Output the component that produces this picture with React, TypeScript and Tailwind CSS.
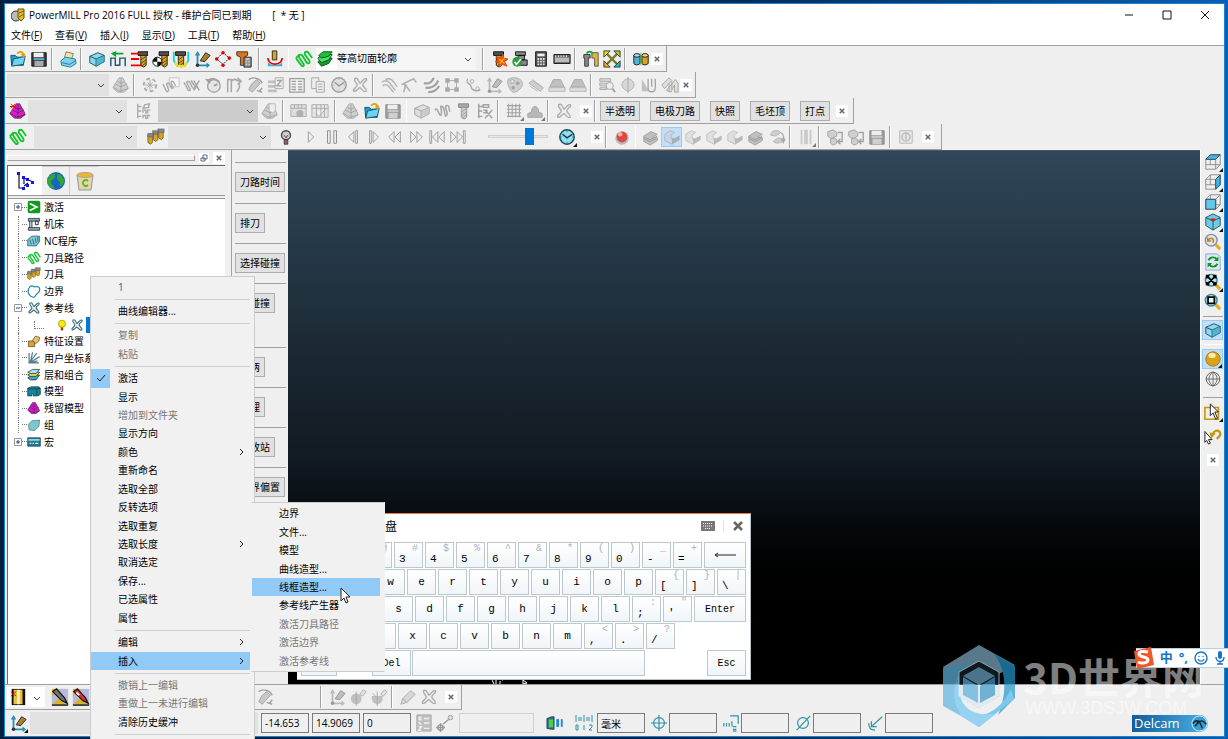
import type { ReactNode } from "react";
import clsx from "clsx";

const tool = (
  <>
    <path d="M4 2h11v4H4z" fill="#555" stroke="#000" />
    <path d="M7 6h6v11l-3 2-3-2z" fill="#d9a520" stroke="#222" />
    <path d="M7 11l6-4M7 15l6-4M8 18l5-4" stroke="#5b3b00" />
  </>
);

const coil = (
  <path
    d="M1 9l6 8c2 2 4 0 2-2L5 9c-2-3 1-5 3-3l5 8c2 2 4 0 3-2l-5-7c-1-3 2-4 4-2l4 6M1 9l4-4"
    fill="none"
    stroke="#12c42a"
    strokeWidth="2"
  />
);

const cone = (color: string) => (
  <>
    <path d="M8 2l4 0 2 4 2 3 2 5-5 4-7 0-5-5 3-5 2-3z" fill={color} stroke="#333" strokeWidth=".8" />
    <path d="M6 6l4 2 4-2M4 9l6 3 6-3M2 13l7 4 9-3M10 3v15" stroke="#333" fill="none" strokeWidth=".8" />
  </>
);

const box = (
  <>
    <path d="M2 7l9-4 7 3v7l-9 5-7-4z" fill="#8ed8ee" stroke="#124b5c" />
    <path d="M2 7l7 3 9-4M9 10v8" fill="none" stroke="#124b5c" />
    <path d="M9 10l9-4v7l-9 5z" fill="#39a5c5" opacity=".7" />
  </>
);

const disk = (
  <>
    <path d="M2 3h16v15H2z" fill="#333a40" stroke="#111" />
    <path d="M4 3h11v5H4z" fill="#eee" />
    <path d="M4 9h12v2H4z" fill="#55b5d0" />
    <path d="M5 12h10v6H5z" fill="#aaa" />
  </>
);

const folder = (
  <>
    <path d="M2 6h5l2 2h7v9H3z" fill="#1d9dcc" stroke="#0a5068" />
    <path d="M5 10l13-3-2 9-13 2z" fill="#6fd3f2" stroke="#0a5068" />
    <path d="M9 4c4-4 7-1 7 2" fill="none" stroke="#e0a000" strokeWidth="2" />
    <path d="M13 5l5-1-1 5z" fill="#e0a000" />
  </>
);

const ribbonX = (
  <path
    d="M4 3c4-2 4 3 6 5 3-2 4-6 7-5 2 2-4 4-4 7 1 3 5 4 4 7-3 2-5-3-7-4-3 1-4 5-7 4-2-3 4-4 4-7 0-2-4-4-3-7z"
    fill="#e7f0f2"
    stroke="#2d6675"
    strokeWidth="1.5"
  />
);

const axes = (
  <>
    <path d="M5 17V4M5 17h12" stroke="#2590b0" strokeWidth="2" fill="none" />
    <path d="M2 6l3-5 3 5zM15 14l4 3-4 3z" fill="#2590b0" />
    <path d="M8 12l6-9 5 3-6 7z" fill="#a9822b" stroke="#222" />
    <circle cx="5" cy="17" r="2" fill="#333" />
  </>
);

const clock = (
  <>
    <circle cx="10" cy="10" r="8" fill="#8edff2" stroke="#1b4b5a" strokeWidth="1.6" />
    <path d="M5 7l5 4 6-4" fill="none" stroke="#134" strokeWidth="1.5" />
    <path d="M10 3v1M10 16v1M3 10h1M16 10h1" stroke="#134" />
  </>
);

const wireBox = (
  <path d="M2 7h11v11H2zM2 7l5-5h11v11l-5 5M13 7l5-5M7 2v11H2M7 13h11" fill="none" stroke="#888" />
);

const lens = (
  <>
    <path d="M13 13l5 5" stroke="#e5ae18" strokeWidth="3.5" />
    <circle cx="8" cy="8" r="6.5" fill="#b6e4ee" stroke="#3e8290" strokeWidth="1.6" />
  </>
);

const step = (
  <>
    <path d="M2 7l6-4 5 2-4 3v3l4 1 5-3v4l-8 5-8-4z" fill="#ccc" stroke="#888" />
    <path d="M9 11l4 1 5-3v4l-8 5v-5z" fill="#777" />
  </>
);

const pages = (
  <>
    <path d="M3 2h8v12H3z" fill="#eee" stroke="#444" />
    <path d="M8 6h9v12H8z" fill="#eee" stroke="#444" />
    <path d="M10 9h5M10 12h5M10 15h5" stroke="#444" />
  </>
);

const icons: Record<string, ReactNode> = {
  folder, disk, box, coil, tool, axes, clock, ribbonX, step, pages,
  cone: cone("#aaa"),
  pinkCone: (
    <>
      {cone("#e815d6")}
      <path d="M2 2l5 5M7 2L2 7M1 5h7" stroke="#e00" />
    </>
  ),
  print: (
    <>
      <path d="M6 9l2-7 8 2-2 6z" fill="#f5e1a0" stroke="#777" />
      <path d="M2 12l5-4 11 2 1 5-6 4-10-2z" fill="#7fd0e8" stroke="#1d7c9c" />
      <path d="M3 14l9 2 6-4" fill="none" stroke="#1d7c9c" />
    </>
  ),
  feed: (
    <>
      <path d="M2 18V9h5v8h5V9h6v9" fill="none" stroke="#1b5d72" strokeWidth="1.6" />
      <path d="M4 4h12" stroke="#12a530" strokeWidth="2" />
      <path d="M8 1L2 4l6 4z" fill="#12a530" />
    </>
  ),
  toolRed: (
    <>
      <g transform="translate(5 0)">{tool}</g>
      <path d="M1 4h9M1 10h9M1 17h12" stroke="#e00" strokeWidth="2" />
    </>
  ),
  toolBall: (
    <>
      <g transform="translate(5 0)">{tool}</g>
      <circle cx="7" cy="13" r="5" fill="#fff" stroke="#111" />
      <path d="M7 13V8a5 5 0 00-5 5zM7 13v5a5 5 0 005-5z" fill="#111" />
    </>
  ),
  toolCup: (
    <>
      {tool}
      <path d="M2 2v10l4 6h8l4-6V2" fill="none" stroke="#19d1dc" strokeWidth="2" />
      <path d="M3 14l4 4h6l4-4" fill="none" stroke="#ece01f" strokeWidth="2.5" />
    </>
  ),
  points: (
    <>
      <path d="M10 3l7 6-7 7-7-6z" fill="none" stroke="#111" strokeDasharray="2 1" />
      <circle cx="10" cy="3" r="2" fill="#d00" /><circle cx="17" cy="9" r="2" fill="#d00" />
      <circle cx="10" cy="17" r="2" fill="#d00" /><circle cx="3" cy="10" r="2" fill="#d00" />
    </>
  ),
  toolCalc: (
    <>
      <path d="M2 2h12v4l-3 2v9H6V8L2 6z" fill="#d8741c" stroke="#333" />
      <path d="M10 8h8v11h-8z" fill="#999" stroke="#222" />
      <path d="M12 10h4M12 13h1M15 13h1M12 16h1M15 16h1" stroke="#fff" />
    </>
  ),
  holder: (
    <>
      <path d="M2 13c2 5 14 5 16 0v5H2z" fill="#3bb1d8" />
      <path d="M7 1h5v10H7z" fill="#d9a520" stroke="#222" />
      <path d="M2 9c1 9 15 9 16 0" fill="none" stroke="#e00" strokeWidth="2" />
    </>
  ),
  layers: (
    <>
      <path d="M2 13l5-4h11l-4 6-8 3z" fill="#0da02a" stroke="#064d12" />
      <path d="M2 9l5-4h11l-4 6-8 3z" fill="#58dd6a" stroke="#064d12" />
      <path d="M3 6l5-4h10l-4 5-8 2z" fill="#19c23a" stroke="#064d12" />
    </>
  ),
  burst: (
    <>
      {tool}
      <path d="M7 7l4 2 4-4v4l5 1-4 3 3 5-5-2-3 3-1-5-4-1 3-2z" fill="#ff5a0a" stroke="#d40" />
      <path d="M10 10l6 5M16 9l-5 6" stroke="#fd4" />
    </>
  ),
  check: (
    <>
      <path d="M5 2h11v4H5zM8 6h7v5H8zM10 11h8v6h-8z" fill="#888" stroke="#111" />
      <circle cx="7" cy="13" r="5.5" fill="#2a9a3c" />
      <path d="M4 13l2 3 5-6" fill="none" stroke="#fff" strokeWidth="1.8" />
    </>
  ),
  calc: (
    <>
      <path d="M4 2h12v16H4z" fill="#555" stroke="#111" />
      <path d="M6 4h8v3H6z" fill="#eee" />
      <path d="M6 10h8M6 13h8M6 16h8" stroke="#ddd" strokeWidth="2" strokeDasharray="2 1" />
    </>
  ),
  ruler: (
    <>
      <path d="M1 5h18v10H1z" fill="#666" stroke="#111" />
      <path d="M2 11h16" stroke="#bbb" strokeWidth="5" />
      <path d="M3 6v2M6 6v2M9 6v2M12 6v2M15 6v2" stroke="#fff" />
    </>
  ),
  clamps: (
    <>
      <path d="M2 5h7v4H7v9H3V9H2z" fill="#888" stroke="#333" />
      <path d="M11 3h7v15h-4V9h-3z" fill="#e2b43a" stroke="#555" />
      <path d="M5 4c2-3 5-3 7 0" fill="none" stroke="#12a530" strokeWidth="2" />
    </>
  ),
  arrows4: (
    <>
      <path d="M4 4l12 12M16 4L4 16" stroke="#777a2a" strokeWidth="2.5" />
      <path d="M1 1h7L1 8z" fill="#e6e21b" stroke="#333" /><path d="M19 1h-7l7 7z" fill="#b4c936" stroke="#333" />
      <path d="M1 19h7l-7-7z" fill="#e8b012" stroke="#333" /><path d="M19 19h-7l7-7z" fill="#18bcd4" stroke="#333" />
    </>
  ),
  cylinders: (
    <>
      <path d="M2 6v9c1 2 5 2 7 0V6z" fill="#4fb4d0" stroke="#111" /><ellipse cx="5.5" cy="6" rx="3.5" ry="2" fill="#a7e3f2" stroke="#111" />
      <path d="M11 6v9c1 2 5 2 7 0V6z" fill="#d9a520" stroke="#111" /><ellipse cx="14.5" cy="6" rx="3.5" ry="2" fill="#f4d77c" stroke="#111" />
      <path d="M10 3v14" stroke="#2c4" />
    </>
  ),
  swirl: (
    <>
      <circle cx="10" cy="10" r="7" fill="none" stroke="#555" strokeDasharray="4 3" strokeWidth="2" />
      <path d="M10 4v12M4 10h12M7 7l6 6M13 7l-6 6" stroke="#555" />
    </>
  ),
  coilBox: (
    <>
      <path d="M8 2h11v10H8z" fill="#fff" stroke="#888" />
      <path d="M1 9l4 8c2 1 3-1 2-3L5 9c2-3 4 0 5 3s3 2 2 0l-2-5c1-3 4 0 5 4" fill="none" stroke="#555" strokeWidth="1.5" />
    </>
  ),
  coilX: (
    <>
      <path d="M1 7l5 9c2 1 3-1 1-3L4 7c2-3 4 0 5 3s3 5 5 3L9 5" fill="none" stroke="#555" strokeWidth="1.6" />
      <path d="M12 5l6 11M18 5l-6 11" stroke="#444" strokeWidth="1.6" />
    </>
  ),
  clockTurn: (
    <>
      <circle cx="11" cy="11" r="7" fill="#ddd" stroke="#444" strokeWidth="1.5" />
      <path d="M1 3l8 1-3 5z" fill="#444" />
      <path d="M4 6c4-5 10-3 13 1M11 11l4-2" fill="none" stroke="#444" strokeWidth="2" />
    </>
  ),
  fork: <path d="M3 18V4h4v14M7 6c2-3 6-3 8 0M12 5h4v8l-3 5M14 2l4 4-4 3" fill="none" stroke="#555" strokeWidth="1.7" />,
  toolTurn: (
    <>
      <path d="M7 8l5-4 4 4-9 10-4-3z" fill="#999" stroke="#444" />
      <path d="M3 4c5-4 13-1 15 4M18 13l-3 4M12 16l6 2" fill="none" stroke="#444" strokeWidth="1.6" />
    </>
  ),
  turnArrows: (
    <>
      <path d="M3 8c0-5 8-7 11-3l-5 4zM17 12c0 5-8 6-11 3l5-4z" fill="#aaa" stroke="#666" />
      <path d="M14 5c4 2 4 5 3 9M15 12l2 4 2-4" fill="none" stroke="#555" strokeWidth="1.5" />
    </>
  ),
  layerZ: (
    <>
      <path d="M1 5h9v3H1zM1 10h8v3H1zM1 15h10v3H1z" fill="#888" />
      <path d="M9 2h9v12H9z" fill="#eee" stroke="#555" />
      <path d="M11 5h5l-5 6h5" fill="none" stroke="#444" strokeWidth="1.5" />
    </>
  ),
  table: (
    <>
      <path d="M2 3h16v15H2z" fill="#fff" stroke="#333" strokeWidth="1.4" />
      <path d="M4 6h5M11 6h5M4 9h5M11 9h5M4 12h5M11 12h5M4 15h5M11 15h5" stroke="#333" strokeWidth="1.4" />
    </>
  ),
  curves: <path d="M2 7c6-5 9 1 15 9M3 11c5-4 7 1 12 7M6 4c5-3 9 1 13 8" fill="none" stroke="#666" strokeWidth="1.5" />,
  hook: <path d="M3 18l2-8-3-1 12-6 3 4M5 10l5 7" fill="none" stroke="#666" strokeWidth="1.8" />,
  arcs: <path d="M2 8c5 1 9-1 11-6M4 13c7 1 12-3 14-8M7 18c6 0 10-3 12-7" fill="none" stroke="#444" strokeWidth="2.5" />,
  squares: <path d="M3 3h4v4H3zM13 3h4v4h-4zM3 13h4v4H3zM13 13h4v4h-4zM7 5h6M7 15h6M5 7v6M15 7v6" fill="#555" stroke="#555" />,
  scurve: (
    <>
      <path d="M4 3c-3 6 4 5 4 9s7 6 10 3" fill="none" stroke="#555" strokeWidth="1.5" />
      <circle cx="9" cy="6" r="2" fill="none" stroke="#555" /><circle cx="15" cy="14" r="2" fill="none" stroke="#555" />
    </>
  ),
  drop: (
    <>
      <path d="M2 4c6-4 14-2 16 3s-6 12-10 11S1 8 2 4z" fill="#aaa" stroke="#555" />
      <circle cx="7" cy="6" r="2" fill="#eee" stroke="#444" /><circle cx="13" cy="8" r="2" fill="#444" /><circle cx="8" cy="13" r="2" fill="#444" />
    </>
  ),
  hatch: <path d="M2 8l4-3 12 8-3 4zM6 4l11 8M3 11l9 6" fill="#aaa" stroke="#666" />,
  frustum: (
    <>
      <path d="M6 4h8l4 8H2z" fill="#888" stroke="#555" />
      <path d="M1 13h18v4H1z" fill="#ccc" stroke="#666" />
    </>
  ),
  find: (
    <>
      <path d="M2 3h12v3H2zM2 8h8v3H2zM2 13h8v2H2z" fill="#bbb" stroke="#555" />
      <circle cx="13" cy="11" r="4" fill="#eee" stroke="#444" /><path d="M16 14l3 4" stroke="#444" strokeWidth="2" />
    </>
  ),
  leaf: <path d="M10 1v18M10 3c-9 2-9 11 0 14 9-3 9-12 0-14" fill="#bbb" stroke="#555" />,
  wedge: (
    <>
      <path d="M2 3l8 14H2z" fill="#888" />
      <path d="M9 3v10c0 6 8 6 8 0V3M13 3v9" fill="none" stroke="#444" strokeWidth="1.4" />
    </>
  ),
  ridge: (
    <>
      <path d="M1 10l8-8 3 3-8 9zM6 16L16 4l3 4v10h-4v-8l-4 8z" fill="#ccc" stroke="#444" />
      <path d="M9 8v9M12 6v9" stroke="#444" />
    </>
  ),
  tree: <path d="M3 2v16M3 5h4M3 10h4M3 16h4M9 7l2-4 5-1-1 4zM9 12V9h3v3h2V9h3M9 18v-3h3v3h2v-3h3" fill="none" stroke="#555" strokeWidth="1.5" />,
  toolPad: (
    <>
      {cone("#aaa")}
      <path d="M9 2h7v8l-3 2-4-2z" fill="#eee" stroke="#777" />
    </>
  ),
  windowTool: (
    <>
      <path d="M1 3h17v13H1zM1 7h17M5 3v4M9 3v4M13 3v4" fill="#ccc" stroke="#555" />
      <circle cx="11" cy="13" r="4" fill="#666" />
    </>
  ),
  windowCheck: <path d="M1 3h18v14H1zM1 7h18M6 3v14M11 3v14M15 3v14M5 12l4 4 8-9" fill="#ddd" stroke="#555" />,
  coil3: <path d="M1 9c3-5 5 9 7 5S5 3 9 5s2 13 5 10-4-10 0-11 2 6 4 7" fill="none" stroke="#555" strokeWidth="1.8" />,
  treeX: <path d="M3 2v16M3 5h4M3 10h4M3 16h4M8 3h6v3H8zM8 9h4v3H8M10 9l8 9M18 9l-8 9" fill="none" stroke="#444" strokeWidth="1.6" />,
  grid: <path d="M4 2v15M8 2v15M12 2v15M16 2v15M2 4h16M2 8h16M2 12h16M2 16h16" stroke="#444" strokeWidth="1.2" />,
  dome: <path d="M2 17v-4l4-2c0-8 8-8 8 0l4 2v4z" fill="#777" stroke="#444" />,
  tools3: (
    <>
      <path d="M13 2h5v9l-2 2-3-2zM7 4h5v9l-2 2-3-2zM1 7h5v9l-2 2-3-2z" fill="#d9a520" stroke="#5a4a22" strokeWidth=".8" />
      <path d="M12 1h7v4h-6zM6 3h6v4H7zM1 6h6v4H1z" fill="#888" stroke="#555" strokeWidth=".6" />
    </>
  ),
  bulb: (
    <>
      <circle cx="10" cy="8" r="5" fill="#ccc" stroke="#444" strokeWidth="1.5" />
      <path d="M8 13h4v5H8z" fill="#8a6a60" stroke="#433" /><path d="M8 8l2 3 2-3" fill="none" stroke="#444" />
    </>
  ),
  bulbOn: (
    <>
      <circle cx="10" cy="8" r="6" fill="#f6f000" stroke="#887700" />
      <path d="M8 14h4v5H8z" fill="#8b3d0c" />
    </>
  ),
  play: <path d="M7 4v12l6-6z" fill="#eee" stroke="#999" />,
  pause: <path d="M5 3h3v14H5zM12 3h3v14h-3z" fill="#eee" stroke="#888" />,
  stepBack: <path d="M11 4v12L5 10zM13 3h2v14h-2z" fill="#eee" stroke="#999" />,
  stepFwd: <path d="M9 4v12l6-6zM5 3h2v14H5z" fill="#eee" stroke="#999" />,
  rewind: <path d="M9 4v12l-6-6zM16 4v12l-6-6z" fill="#eee" stroke="#999" />,
  forward: <path d="M4 4v12l6-6zM11 4v12l6-6z" fill="#eee" stroke="#999" />,
  first: <path d="M2 3h2v14H2zM11 4v12l-6-6zM18 4v12l-6-6z" fill="#eee" stroke="#999" />,
  last: <path d="M2 4v12l6-6zM9 4v12l6-6zM16 3h2v14h-2z" fill="#eee" stroke="#999" />,
  ball: (
    <>
      <circle cx="10" cy="11" r="7.5" fill="#bbb" />
      <circle cx="10" cy="10" r="6" fill="#dc4a44" /><circle cx="8" cy="7" r="2.5" fill="#f8b0a8" />
    </>
  ),
  stackStep: (
    <>
      <path d="M2 9l8-5 7 3-5 3 5 1v3l-8 5-7-4z" fill="#888" stroke="#444" />
      <path d="M2 12l7 3 8-4M2 10l7 3 8-4" fill="none" stroke="#333" />
    </>
  ),
  stripes: <path d="M4 2h2v16H4zM8 2h4v16H8zM14 2h2v16h-2z" fill="#999" />,
  power: (
    <>
      <path d="M3 3h14v14H3z" fill="#ddd" stroke="#777" />
      <circle cx="10" cy="10" r="4.5" fill="none" stroke="#777" strokeWidth="1.5" /><path d="M10 7v6" stroke="#777" strokeWidth="1.5" />
    </>
  ),
  stepOut: (
    <>
      <path d="M2 4l6-2 4 3v4l-6 3-4-3zM5 12l4-1 3 2v4l-4 2-3-2z" fill="#aaa" stroke="#444" />
      <path d="M13 5h5v10h-4M16 12l-3 3 3 3" fill="none" stroke="#444" strokeWidth="1.5" />
    </>
  ),
  run: (
    <>
      <rect x="1" y="1" width="18" height="18" rx="3" fill="#0e9b1d" />
      <path d="M4 5l10 5-10 5" fill="none" stroke="#fff" strokeWidth="2.5" />
    </>
  ),
  machine: (
    <>
      <path d="M2 2h16v4H2zM2 15h16v4H2z" fill="#8aa4aa" stroke="#123" />
      <path d="M4 6v9M7 6v9M12 6h4v5h-4z" stroke="#123" fill="#fff" strokeWidth="1.3" />
    </>
  ),
  nc: (
    <>
      <path d="M1 8l6-5h11v8l-5 6H1z" fill="#7cc4d6" stroke="#1c5564" />
      <path d="M4 8l2 7M8 7l2 8M12 6l1 7M15 4l1 7" stroke="#2a6a7a" strokeWidth="1.2" />
    </>
  ),
  boundary: <path d="M4 4c4-4 5 1 8 0s7 0 6 5-5 4-6 8-7 1-9-2-2-8 1-11z" fill="#fff" stroke="#1b87a3" strokeWidth="1.7" />,
  feature: (
    <>
      <path d="M2 10h9v8H2z" fill="#d6a23c" stroke="#5b4010" />
      <path d="M8 9l4-6 6 2-1 5-5 4z" fill="#e8c070" stroke="#5b4010" />
    </>
  ),
  frame: <path d="M3 3v14h14M4 16L14 3M5 15L8 2M5 16L18 8M5 17l10-3" fill="none" stroke="#557e8a" strokeWidth="1.8" />,
  level: (
    <>
      <path d="M1 14l6-4h11l-5 7H5z" fill="#3aa9cc" stroke="#123" />
      <path d="M1 10l6-4h11l-5 6H5z" fill="#f1dc3c" stroke="#123" />
      <path d="M1 6l7-4h10l-5 6H5z" fill="#a9e0f0" stroke="#123" />
    </>
  ),
  model: (
    <>
      <path d="M1 6l5-2h11l2 2v9l-4 2H9v-3H7v3H1z" fill="#15859b" stroke="#063b47" />
      <path d="M1 7h13v9M14 7l5-1" fill="none" stroke="#063b47" />
    </>
  ),
  residual: cone("#e012d6"),
  group: <path d="M2 9l5-5 11-1-1 9-6 6-8-1z" fill="#7cc6cc" stroke="#3c8187" />,
  macro: (
    <>
      <path d="M1 4h18v12H1z" fill="#1f7f96" stroke="#083844" />
      <path d="M2 7h16" stroke="#bfe8f2" strokeWidth="2" /><path d="M4 12h2M8 12h2M12 12h4" stroke="#fff" strokeWidth="2" />
    </>
  ),
  explorer: (
    <>
      <path d="M4 3v14h5M9 6v7M9 7l9 4M9 15l4-3" fill="none" stroke="#113" strokeWidth="1.2" />
      <path d="M2 1h3v3H2zM7 5h3v3H7zM11 7h3v3h-3zM16 10h3v3h-3zM7 16h3v3H7zM11 13h3v3h-3z" fill="#1414f0" />
    </>
  ),
  globe: (
    <>
      <circle cx="10" cy="10" r="9" fill="#1766c4" />
      <path d="M4 4c3-3 6-1 5 2s-4 2-4 5 4 3 3 7C3 17 1 13 1 9zM12 3c4 1 6 4 6 8-1 3-3 5-4 4s1-4-1-5-3-5-1-7z" fill="#31a536" />
    </>
  ),
  bin: (
    <>
      <path d="M2 4h16l-2 15H4z" fill="#d8d3bf" stroke="#999" />
      <path d="M4 6h12l-1 11H6z" fill="#ecd59a" />
      <ellipse cx="10" cy="4" rx="8" ry="2.5" fill="#f0b52c" stroke="#a9a9a9" />
      <path d="M13 10c-2-2-5-1-5 2s3 4 5 2" fill="none" stroke="#4ab53f" strokeWidth="1.8" />
    </>
  ),
  viewTop: (
    <>
      {wireBox}
      <path d="M2 7l5-5h11l-5 5z" fill="#43b7de" stroke="#246" />
    </>
  ),
  viewSide: (
    <>
      {wireBox}
      <path d="M13 7l5-5v11l-5 5z" fill="#43b7de" stroke="#246" />
    </>
  ),
  viewFront: (
    <>
      {wireBox}
      <path d="M2 7h11v11H2z" fill="#63c7e8" stroke="#246" />
    </>
  ),
  viewIso: (
    <>
      <path d="M10 1l8 4v9l-8 5-8-5V5z" fill="#6fcbe6" stroke="#184d60" />
      <path d="M2 5l8 4 8-4M10 9v10" fill="none" stroke="#184d60" /><path d="M7 6h6l-3 4z" fill="#e11" />
    </>
  ),
  zoomBack: (
    <>
      <path d="M13 13l5 5" stroke="#e5ae18" strokeWidth="3.5" />
      <circle cx="8" cy="8" r="6.5" fill="#e4e6f2" stroke="#8a8fb0" strokeWidth="1.6" />
      <path d="M5 8c2-4 7-2 5 3M4 5v4h4" fill="none" stroke="#b98a10" strokeWidth="1.7" />
    </>
  ),
  refresh: (
    <>
      <path d="M2 1h13l3 3v15H2z" fill="#dfe6fa" stroke="#8fa0cf" />
      <path d="M5 8c2-4 7-4 9-1M15 12c-2 4-7 4-9 1" fill="none" stroke="#0a9a1c" strokeWidth="2.2" />
      <path d="M16 4v5h-5zM4 16v-5h5z" fill="#0a9a1c" />
    </>
  ),
  zoomFit: (
    <>
      {lens}
      <path d="M4 4l8 8M12 4l-8 8M3 6V3h3M10 3h3v3M3 10v3h3M10 13h3v-3" fill="none" stroke="#000" strokeWidth="1.9" />
    </>
  ),
  zoomBox: (
    <>
      {lens}
      <path d="M4.500 4.500h7v7h-7z" fill="#dff" stroke="#000" strokeWidth="1.9" />
    </>
  ),
  sphere: (
    <>
      <circle cx="10" cy="10" r="8" fill="#d8a31c" stroke="#9b7616" /><ellipse cx="9" cy="6" rx="4" ry="3" fill="#fbe9a8" />
    </>
  ),
  wireGlobe: (
    <>
      <circle cx="10" cy="10" r="7.5" fill="#eee" stroke="#555" />
      <path d="M2 10h16M10 2v16M10 2c-6 5-6 11 0 16M10 2c6 5 6 11 0 16" fill="none" stroke="#666" />
    </>
  ),
  pick: (
    <>
      <path d="M1 5h15v13H1z" fill="none" stroke="#c8960c" strokeWidth="1.8" />
      <path d="M7 1l9 9h-4l3 7-2 1-3-7-3 3z" fill="#fff" stroke="#111" />
    </>
  ),
  pickUndo: (
    <>
      <path d="M1 5l8 9H5l2 4-2 1-2-4-2 2z" fill="#fff" stroke="#111" />
      <path d="M10 9c0-6 9-7 8 0-1 2-2 3-4 4" fill="none" stroke="#c8960c" strokeWidth="2.5" /><path d="M6 6l7 1-5 6z" fill="#c8960c" />
    </>
  ),
  stock: (
    <>
      <path d="M3 1h15v18H3z" fill="#111" /><path d="M5 2h10v16H5z" fill="#e9bf45" /><path d="M9 2h3v16H9z" fill="#fff1b0" />
      <path d="M2 4l6 5M8 4L2 9M5 2v8" stroke="#d00" />
    </>
  ),
  pen: (
    <>
      <path d="M1 1h18v18H1z" fill="#b9b9e0" /><path d="M1 1h9l-9 9zM1 19L11 9l5 10z" fill="#d8b32c" />
      <path d="M2 4l4-3 9 10 3 6-6-3z" fill="#777" stroke="#111" strokeWidth="1.4" /><path d="M1 19h18" stroke="#111" strokeWidth="1.5" />
    </>
  ),
  penRed: (
    <>
      <path d="M1 1h18v18H1z" fill="#b9b9e0" /><path d="M1 1h9l-9 9zM1 19L11 9l5 10z" fill="#d8b32c" />
      <path d="M2 4l4-3 9 10 3 6-6-3z" fill="#d33" stroke="#111" strokeWidth="1.4" /><path d="M5 5l3 3" stroke="#fff" strokeWidth="2" />
      <path d="M1 19h18" stroke="#111" strokeWidth="1.5" />
    </>
  ),
  pencil: <path d="M2 18l2-6 9-9 5 4-9 9zM4 12l5 4" fill="#bbb" stroke="#555" />,
  plug: (
    <>
      <circle cx="8" cy="12" r="6" fill="#888" /><path d="M8 4v16M12 7l4-5 3 2-4 5z" fill="#ddd" stroke="#555" />
    </>
  ),
  plugHalf: (
    <>
      <path d="M2 9h12v3a6 6 0 01-12 0z" fill="#888" /><path d="M8 4v16M3 6l4 4M12 7l4-5 3 2-4 5z" fill="#ddd" stroke="#555" />
    </>
  ),
  xyz: (
    <>
      <path d="M2 1h16v18H2z" fill="#888" stroke="#555" /><path d="M4 3l3 4M7 3L4 7M4 9l3 3M4 14h3l-3 4h3M10 5h6M10 10h6M10 16h6" fill="none" stroke="#eee" strokeWidth="1.6" />
    </>
  ),
  snap: (
    <>
      <circle cx="5" cy="15" r="3" fill="none" stroke="#999" strokeWidth="1.5" /><path d="M5 10v10M0 15h10M8 11l6-5" stroke="#999" strokeWidth="1.5" />
      <circle cx="16" cy="4" r="2.500" fill="#ddd" stroke="#999" />
    </>
  ),
  battery: (
    <>
      <path d="M1 5l5-2h3v14H6l-5-1z" fill="#2b6d84" stroke="#124" strokeWidth=".7" /><path d="M3 6h5v9H3z" fill="#46d04b" /><path d="M12 6h2v8h-2zM17 6h1v8h-1z" fill="#1684e0" stroke="#1684e0" />
    </>
  ),
  target: <path d="M10 1v18M1 10h18M10 4a6 6 0 100 12 6 6 0 000-12z" fill="none" stroke="#2d93a6" strokeWidth="1.3" />,
  corner: <path d="M9 2h9v9M2 10v4M5 10v4M8 10v4M11 8v6M12 14h4M12 17h4M12 19h4" fill="none" stroke="#2d93a6" strokeWidth="1.3" />,
  diameter: <path d="M3 18L18 2M10 4a6 6 0 100 12 6 6 0 000-12z" fill="none" stroke="#2d93a6" strokeWidth="1.3" />,
  radius: <path d="M18 3L7 13M6 8v6h6M3 10c0 5 2 8 7 8" fill="none" stroke="#2d93a6" strokeWidth="1.3" />,
};

function Icon({ name, dim, className = "w-[18px] h-[18px]" }: { name: string; dim?: boolean; className?: string }) {
  return (
    <svg viewBox="0 0 20 20" aria-hidden="true" className={clsx("shrink-0", className, dim && "opacity-45 grayscale")}>
      {icons[name]}
    </svg>
  );
}

function IconButton({ name, dim, active, corner }: { name: string; dim?: boolean; active?: boolean; corner?: boolean }) {
  return (
    <button
      aria-label={name}
      className={clsx(
        "relative flex h-5 w-[21px] shrink-0 items-center justify-center",
        active && "border border-[#99cbf2] bg-[#c4dff5]"
      )}
    >
      <Icon name={name} dim={dim} />
      {corner && (
        <svg viewBox="0 0 4 4" aria-hidden="true" className="absolute right-0 bottom-0 h-1 w-1">
          <path d="M4 0v4H0z" fill={dim ? "#777" : "#111"} />
        </svg>
      )}
    </button>
  );
}

const Icons = ({ names, dim }: { names: string; dim?: boolean }) => (
  <>
    {names.split(" ").map((name, i) => (
      <IconButton key={i} name={name} dim={dim} />
    ))}
  </>
);

const Sep = ({ light }: { light?: boolean }) => (
  <div className={clsx("mr-1 ml-0.5 h-[22px] w-0.5 shrink-0 border-r border-white", !light && "border-l border-l-[#a0a0a0]")} />
);

const CloseBox = () => (
  <button aria-label="close" className="flex h-3 w-3 shrink-0 items-center justify-center bg-white">
    <svg viewBox="0 0 8 8" className="h-1.5 w-1.5" aria-hidden="true">
      <path d="M1 1l6 6M7 1L1 7" stroke="#5c6b7a" strokeWidth="2" />
    </svg>
  </button>
);

function Chevron() {
  return (
    <svg viewBox="0 0 8 8" className="pointer-events-none absolute top-[8px] right-1 h-2 w-2" aria-hidden="true">
      <path d="M1 2l3 3 3-3" fill="none" stroke="#444" />
    </svg>
  );
}

function Combo({ label, className }: { label: string; className: string }) {
  return (
    <div className={clsx("relative h-[22px] shrink-0", className)}>
      <select aria-label={label} className="h-full w-full appearance-none bg-transparent outline-none">
        <option></option>
      </select>
      <Chevron />
    </div>
  );
}

const Toolbar = ({ children }: { children: ReactNode }) => (
  <div className="flex h-[26px]">
    <div className="flex items-center border-r border-b border-[#a0a0a0] pr-[3px] pl-0.5">{children}</div>
  </div>
);

const TextButton = ({ children }: { children: ReactNode }) => (
  <button className="h-5 shrink-0 border border-[#adadad] bg-[#e1e1e1] px-1 leading-4 whitespace-nowrap">{children}</button>
);

type TreeNode = { icon: string; label: string; expand?: string };

const tree: TreeNode[] = [
  { icon: "run", label: "激活", expand: "+" },
  { icon: "machine", label: "机床" },
  { icon: "nc", label: "NC程序" },
  { icon: "coil", label: "刀具路径" },
  { icon: "tools3", label: "刀具" },
  { icon: "boundary", label: "边界" },
  { icon: "ribbonX", label: "参考线", expand: "-" },
  { icon: "child", label: "1" },
  { icon: "feature", label: "特征设置" },
  { icon: "frame", label: "用户坐标系" },
  { icon: "level", label: "层和组合" },
  { icon: "model", label: "模型" },
  { icon: "residual", label: "残留模型" },
  { icon: "group", label: "组" },
  { icon: "macro", label: "宏", expand: "+" },
];

function Explorer() {
  return (
    <section className="flex w-[220px] shrink-0 flex-col pl-0.5">
      <div className="flex h-[15px] items-center gap-1">
        <div className="h-1.5 flex-1 border border-[#a0a0a0] border-l-white border-t-white bg-[#efefef]" />
        <button aria-label="float" className="flex h-2.5 w-2.5 items-center justify-center bg-white">
          <svg viewBox="0 0 8 8" className="h-2 w-2" aria-hidden="true">
            <path d="M3 1h4v4H3zM1 4h4v3H1z" fill="#fff" stroke="#5c6b7a" />
          </svg>
        </button>
        <CloseBox />
      </div>
      <div className="flex flex-1 flex-col border-t border-l border-[#696969]">
        <div className="flex h-[30px] border-b border-[#999]">
          <button aria-label="explorer" className="flex w-[34px] items-center justify-center bg-white">
            <Icon name="explorer" className="h-5 w-5" />
          </button>
          <button aria-label="globe" className="flex w-7 items-center justify-center border-t border-r border-[#d0d0d0]">
            <Icon name="globe" className="h-5 w-5" />
          </button>
          <button aria-label="bin" className="flex w-[29px] items-center justify-center border-t border-[#d0d0d0]">
            <Icon name="bin" className="h-5 w-5" />
          </button>
        </div>
        <div className="mt-0.5 flex-1 border-t border-[#999] bg-white pl-1.5">
          <ul className="flex h-[251px] flex-col">
            {tree.map((node) => (
              <li key={node.icon} className="flex flex-1 items-center">
                <span className="flex w-2 shrink-0 justify-center">
                  {node.expand ? (
                    <svg viewBox="0 0 8 8" className="h-2 w-2" aria-hidden="true">
                      <path d="M0.500 0.500h7v7h-7z" fill="#fff" stroke="#999" />
                      <path d={node.expand === "+" ? "M2 4h4M4 2v4" : "M2 4h4"} stroke="#22448c" />
                    </svg>
                  ) : (
                    <span className="h-4 border-l border-dotted border-[#777]" />
                  )}
                </span>
                {node.icon === "child" ? (
                  <>
                    <span className="ml-3 h-2 w-2.5 border-b border-l border-dotted border-[#777]" />
                    <span className="w-3" />
                    <Icon name="bulbOn" className="h-3 w-3" />
                    <Icon name="ribbonX" className="mx-0.5 h-3.5 w-3.5" />
                    <span className="bg-[#0078d7] px-1 leading-4 text-white">{node.label}</span>
                  </>
                ) : (
                  <>
                    <span className="w-[5px] border-t border-dotted border-[#777]" />
                    <Icon name={node.icon} className="h-3.5 w-3.5" />
                    <span className="ml-[3px] leading-4 whitespace-nowrap">{node.label}</span>
                  </>
                )}
              </li>
            ))}
          </ul>
        </div>
      </div>
    </section>
  );
}

const macros = [
  ["刀路时间", "h-[41px]"],
  ["排刀", "h-[40px]"],
  ["选择碰撞", "h-[40px]"],
  ["查碰撞", "h-[64px]"],
  ["剖两", "h-[40px]"],
  ["整理", "h-[40px]"],
  ["修改站", "h-[40px]"],
  ["边界偏置", "h-[40px]"],
];

function MacroStrip() {
  return (
    <div className="ml-1.5 flex w-[57px] shrink-0 flex-col border-l border-[#a0a0a0] pt-3 pr-0.5 pl-[3px]">
      {macros.map(([label, height]) => (
        <div key={label} className={clsx("border-t border-[#a0a0a0] pt-[9px]", height)}>
          <TextButton>{label}</TextButton>
        </div>
      ))}
    </div>
  );
}

function ViewBar() {
  return (
    <div className="flex w-[24px] shrink-0 flex-col items-center border-l border-white bg-[#efefef] pt-0.5">
      <IconButton name="viewTop" corner />
      <IconButton name="viewSide" corner />
      <IconButton name="viewFront" corner />
      <IconButton name="viewIso" corner />
      <IconButton name="zoomBack" />
      <IconButton name="refresh" />
      <IconButton name="zoomFit" corner />
      <IconButton name="zoomBox" />
      <div className="mt-1 mb-[3px] w-5 border-t border-[#a0a0a0]" />
      <IconButton name="box" active />
      <div className="my-1 w-5 border-t border-white" />
      <IconButton name="sphere" active corner />
      <IconButton name="wireGlobe" />
      <div className="mt-2 mb-1 w-5 border-t border-[#a0a0a0]" />
      <IconButton name="pick" corner />
      <div className="h-1" />
      <IconButton name="pickUndo" />
      <div className="h-2" />
      <CloseBox />
    </div>
  );
}

type MenuItem = { label: string; off?: boolean; sub?: boolean; hot?: boolean; checked?: boolean };
type MenuGroup = { height: string; items: MenuItem[] };

const contextMenu: MenuGroup[] = [
  { height: "h-[18px]", items: [{ label: "1" }] },
  { height: "h-[18px]", items: [{ label: "曲线编辑器..." }] },
  { height: "h-[37px]", items: [{ label: "复制", off: true }, { label: "粘贴", off: true }] },
  {
    height: "h-[258px]",
    items: [
      { label: "激活", checked: true },
      { label: "显示" },
      { label: "增加到文件夹", off: true },
      { label: "显示方向" },
      { label: "颜色", sub: true },
      { label: "重新命名" },
      { label: "选取全部" },
      { label: "反转选项" },
      { label: "选取重复" },
      { label: "选取长度", sub: true },
      { label: "取消选定" },
      { label: "保存..." },
      { label: "已选属性" },
      { label: "属性" },
    ],
  },
  { height: "h-[37px]", items: [{ label: "编辑", sub: true }, { label: "插入", sub: true, hot: true }] },
  {
    height: "h-[55px]",
    items: [{ label: "撤销上一编辑", off: true }, { label: "重做上一未进行编辑", off: true }, { label: "清除历史缓冲" }],
  },
  { height: "h-1", items: [] },
];

const insertMenu: MenuGroup[] = [
  {
    height: "h-[166px]",
    items: [
      { label: "边界" },
      { label: "文件..." },
      { label: "模型" },
      { label: "曲线造型..." },
      { label: "线框造型...", hot: true },
      { label: "参考线产生器" },
      { label: "激活刀具路径", off: true },
      { label: "激活边界", off: true },
      { label: "激活参考线", off: true },
    ],
  },
];

function Menu({ groups, className }: { groups: MenuGroup[]; className: string }) {
  return (
    <div role="menu" className={clsx("absolute border bg-[#f1f1f1] py-px", className)}>
      {groups.map((group, g) => (
        <div key={g}>
          {g > 0 && <div className="mr-1 ml-6 h-1.5 pt-[3px]"><div className="border-t border-[#d0d0d0]" /></div>}
          <div className={clsx("flex flex-col", group.height)}>
            {group.items.map((item) => (
              <button
                key={item.label}
                role="menuitem"
                className={clsx(
                  "relative mr-1 flex flex-1 items-center pl-[27px] text-left leading-4",
                  item.hot && "bg-[#91c9f7]",
                  item.off && "text-[#777]",
                  item.label === "1" && "text-[#2f5f7c]"
                )}
              >
                {item.checked && (
                  <span className="absolute left-0 flex h-[19px] w-[19px] items-center justify-center bg-[#91c9f7]">
                    <svg viewBox="0 0 10 10" className="h-2.5 w-2.5" aria-hidden="true">
                      <path d="M1 5l3 3 5-6" fill="none" stroke="#222" />
                    </svg>
                  </span>
                )}
                {item.label}
                {item.sub && (
                  <svg viewBox="0 0 8 8" className="absolute right-1 h-2 w-2" aria-hidden="true">
                    <path d="M2 1l3 3-3 3" fill="none" stroke="#222" />
                  </svg>
                )}
              </button>
            ))}
          </div>
        </div>
      ))}
    </div>
  );
}

// Each key is "main" or "main shifted"
const keyRows = [
  ["` ~", "1 !", "2 @", "3 #", "4 $", "5 %", "6 ^", "7 &", "8 *", "9 (", "0 )", "- _", "= +"],
  ["q", "w", "e", "r", "t", "y", "u", "i", "o", "p", "[ {", "] }", "\\ |"],
  ["a", "s", "d", "f", "g", "h", "j", "k", "l", "; :", "' \""],
  ["z", "x", "c", "v", "b", "n", "m", ", <", ". >", "/ ?"],
];

const keyLook = "relative h-[26px] shrink-0 border border-[#bcc8d0] bg-linear-to-b from-white to-[#f0f5f9]";

function Key({ value }: { value: string }) {
  const [main, shifted] = value.split(" ");
  return (
    <button className={clsx(keyLook, "w-[29px]")}>
      <span className={shifted ? "absolute bottom-0 left-1 leading-4" : ""}>{main}</span>
      {shifted && <span className="absolute top-0 right-1 text-[10px] leading-3 text-[#aab2b8]">{shifted}</span>}
    </button>
  );
}

function Keyboard() {
  return (
    <section className="absolute top-[513px] left-[297px] h-[167px] w-[454px] border-t border-r border-b border-t-[#f07840] border-r-[#b5c2ca] border-b-[#b5c2ca] bg-white px-1 font-['Liberation_Mono','Noto_Sans_CJK_SC',monospace] text-[11px] text-black">
      <header className="flex h-7 items-center pb-1">
        <h2 className="w-24 font-['Noto_Sans_CJK_SC',sans-serif] text-xs text-right">键盘</h2>
        <span className="flex-1" />
        <svg viewBox="0 0 14 10" className="h-2.5 w-3.5" aria-hidden="true">
          <path d="M0 0h14v10H0z" fill="#777" />
          <path d="M2 2.500h10M2 5h10M4 7.500h6" stroke="#fff" strokeDasharray="1 1" />
        </svg>
        <span className="mr-1.5 ml-2 h-3 border-l border-[#dde3e8]" />
        <button aria-label="close" className="flex h-5 w-4 items-center justify-center">
          <svg viewBox="0 0 10 10" className="h-2.5 w-2.5" aria-hidden="true">
            <path d="M1 1l8 8M9 1L1 9" stroke="#666" strokeWidth="2.500" />
          </svg>
        </button>
      </header>
      <div className="flex flex-col gap-px">
        {keyRows.map((row, r) => (
          <div key={r} className={clsx("flex justify-end gap-0.5", r === 3 && "pr-[71px]")}>
            {row.map((value) => (
              <Key key={value} value={value} />
            ))}
            {r === 0 && (
              <button aria-label="backspace" className={clsx(keyLook, "flex w-[42px] items-center justify-center")}>
                <svg viewBox="0 0 22 6" className="h-1.5 w-[22px]" aria-hidden="true">
                  <path d="M1 3h21M4 1L1 3l3 2" fill="none" stroke="#222" />
                </svg>
              </button>
            )}
            {r === 2 && <button className={clsx(keyLook, "w-[52px] text-[10px]")}>Enter</button>}
          </div>
        ))}
        <div className="flex text-[10px]">
          <button aria-label="fn" className={clsx(keyLook, "w-9")}></button>
          <span className="flex-1" />
          <button className={clsx(keyLook, "w-[39px]")}>Del</button>
          <button aria-label="space" className={clsx(keyLook, "mr-[62px] ml-px w-[233px]")}></button>
          <button className={clsx(keyLook, "w-[39px]")}>Esc</button>
        </div>
      </div>
    </section>
  );
}

function StatusField({ label, value = "", className = "w-12 border-[#7a7a7a]" }: { label: string; value?: string; className?: string }) {
  return (
    <input
      aria-label={label}
      defaultValue={value}
      className={clsx("h-5 shrink-0 border bg-[#efefef] px-[3px] outline-none", className)}
    />
  );
}

function Watermark() {
  return (
    <div className="pointer-events-none absolute right-6 bottom-3 flex items-center gap-2">
      <svg viewBox="0 0 72 82" className="h-[82px] w-[72px] opacity-70" aria-hidden="true">
        <path d="M36 0l36 20-18 10C44 20 20 18 4 40L0 22z" fill="#7fabc4" />
        <path d="M51 9l21 12v32L55 70C64 50 64 25 51 9z" fill="#2497cf" />
        <path d="M71 54L36 82 18 71c20 2 38-2 50-27z" fill="#4db8ed" />
        <path d="M0 24v37l18 10C20 62 8 54 22 24l8-7z" fill="#5eb5e0" />
        <path d="M2 60l34 22 18-14C36 72 20 66 17 50V28C10 40 8 54 18 70z" fill="#71c7f4" />
        <path d="M36 16l20 11v24L36 63 16 51V27z" fill="#16232c" stroke="#c9e8f8" />
        <path d="M16 40h40v11L36 63 16 51z" fill="#dcebf4" />
        <path d="M36 22l16 9-16 9-16-9z" fill="#6aa5c4" />
        <path d="M20 32l15 9v17l-15-8z" fill="#58aedb" />
        <path d="M52 32l-15 9v17l15-8z" fill="#3c98ca" />
      </svg>
      <div className="flex flex-col text-white/50">
        <span className="font-['Noto_Sans_CJK_SC',sans-serif] text-[42px] leading-[44px] font-bold whitespace-nowrap">3D世界网</span>
        <span className="pl-0.5 font-['Liberation_Sans',sans-serif] text-lg leading-5">WWW.3DSJW.COM</span>
      </div>
    </div>
  );
}

function InputBar() {
  return (
    <div className="absolute right-0 bottom-[71px] flex h-5 items-center gap-1.5 border-y border-[#b9cfe0] bg-white pr-0.5 text-[#1673c8]">
      <svg viewBox="0 0 22 22" className="-ml-1 h-[22px] w-[22px]" aria-label="S">
        <path d="M2 4l17-4 3 18-17 4z" fill="#f0562a" />
        <path d="M16 5c-4-1-9-1-9 2 0 4 9 2 9 6 0 3-6 4-10 2" fill="none" stroke="#fff" strokeWidth="3" />
      </svg>
      <span className="text-[13px] font-bold">中</span>
      <span className="text-[13px] font-bold">°,</span>
      <svg viewBox="0 0 14 14" className="h-3.5 w-3.5" aria-hidden="true">
        <circle cx="7" cy="7" r="6" fill="none" stroke="#1673c8" strokeWidth="1.4" />
        <path d="M4 8c1 3 5 3 6 0M5 5v1M9 5v1" fill="none" stroke="#1673c8" strokeWidth="1.2" />
      </svg>
      <svg viewBox="0 0 12 14" className="h-3.5 w-3" aria-hidden="true">
        <rect x="4" y="0" width="4" height="8" rx="2" fill="#1673c8" />
        <path d="M2 6c0 6 8 6 8 0M6 10v3M3 13h6" fill="none" stroke="#1673c8" strokeWidth="1.4" />
      </svg>
    </div>
  );
}

const menus = [["文件", "F"], ["查看", "V"], ["插入", "I"], ["显示", "D"], ["工具", "T"], ["帮助", "H"]];

export default function App() {
  return (
    <div className="relative flex min-h-screen w-full overflow-hidden bg-linear-to-r from-[#04203f] from-50% to-[#0a5fb4] pt-[3px] pr-[3px] pb-0.5 pl-1 font-['Open_Sans','Noto_Sans_CJK_SC',sans-serif] text-[10px] text-black">
      <div className="flex min-w-0 flex-1 flex-col border border-[#1883d7] bg-[#efefef]">
        <header className="flex h-[22px] items-center bg-white pl-1.5">
          <svg viewBox="0 0 14 14" className="h-3.5 w-3.5" aria-hidden="true">
            <circle cx="5" cy="8" r="5" fill="#bbb" stroke="#333" />
            <path d="M7 1h6v9l-3 3-3-3z" fill="#e8c020" stroke="#665000" />
            <path d="M8 5l5-2M8 9l5-3" stroke="#654" />
          </svg>
          <h1 className="ml-1 flex-1 whitespace-pre">PowerMILL Pro 2016 FULL 授权 - 维护合同已到期        [  * 无 ]</h1>
          <div className="flex text-[#111]">
            {["M1 5h8", "M1 1h8v8H1z", "M1 1l8 8M9 1L1 9"].map((d, i) => (
              <button key={d} aria-label={["minimize", "maximize", "close"][i]} className="flex h-5 w-[38px] items-center justify-center">
                <svg viewBox="0 0 10 10" className="h-2.5 w-2.5" aria-hidden="true">
                  <path d={d} fill="none" stroke="currentColor" />
                </svg>
              </button>
            ))}
          </div>
        </header>
        <nav className="flex h-[19px] items-center gap-[13px] bg-white pl-1.5">
          {menus.map(([label, key]) => (
            <button key={key}>
              {label}(<u>{key}</u>)
            </button>
          ))}
        </nav>

        <div className="border-t border-[#a0a0a0]">
          <Toolbar>
            <Icons names="folder disk" />
            <Sep />
            <Icons names="print" />
            <Sep />
            <Icons names="box feed toolRed toolBall toolCup axes points toolCalc" />
            <div className="w-0.5" />
            <Sep />
            <Icons names="holder" />
            <Sep light />
            <Icons names="coil" />
            <div className="relative mr-1 ml-0.5 flex h-[22px] w-[160px] items-center bg-white">
              <Icon name="layers" />
              <select aria-label="strategy" className="ml-[3px] h-full flex-1 appearance-none bg-[#efefef]/60 outline-none">
                <option>等高切面轮廓</option>
              </select>
              <Chevron />
            </div>
            <Sep />
            <Icons names="burst check calc ruler" />
            <Sep />
            <Icons names="clamps arrows4" />
            <Sep />
            <Icons names="cylinders" />
            <CloseBox />
          </Toolbar>
          <Toolbar>
            <Combo label="toolpath" className="mr-px w-[102px] bg-[#e1e1e1]" />
            <Icons dim names="cone" />
            <Sep />
            <Icons dim names="swirl coilBox coilX clockTurn fork toolTurn layerZ table pages clock ribbonX" />
            <Sep />
            <Icons dim names="curves hook arcs squares scurve axes drop hatch frustum frustum" />
            <Sep />
            <Icons dim names="find leaf wedge ridge" />
            <CloseBox />
          </Toolbar>
          <Toolbar>
            <IconButton name="pinkCone" />
            <Combo label="stock model" className="mr-1.5 w-[99px] bg-[#e1e1e1]" />
            <Icons dim names="tree" />
            <Combo label="state" className="mr-px ml-1 w-[100px] bg-[#ccc]" />
            <Icons dim names="toolPad" />
            <Sep />
            <Icons dim names="windowTool windowCheck" />
            <div className="w-0.5" />
            <Sep />
            <Icons dim names="cone" />
            <Icons names="folder" />
            <Icons dim names="disk" />
            <Sep light />
            <Icons dim names="box coil3 tool treeX" />
            <Sep />
            <IconButton name="grid" dim corner />
            <IconButton name="dome" dim corner />
            <Sep />
            <Icons dim names="ribbonX" />
            <div className="w-1.5" />
            <CloseBox />
            <Sep />
            <div className="flex gap-2.5">
              {["半透明", "电极刀路", "快照", "毛坯顶", "打点"].map((label) => (
                <TextButton key={label}>{label}</TextButton>
              ))}
            </div>
            <div className="w-1.5" />
            <CloseBox />
            <div className="w-0.5" />
          </Toolbar>
          <Toolbar>
            <IconButton name="coil" />
            <Combo label="simulated toolpath" className="mr-2 ml-1.5 w-[103px] bg-[#e1e1e1]" />
            <Icons names="tools3" />
            <Combo label="simulated tool" className="ml-0.5 w-[103px] bg-[#e1e1e1]" />
            <div className="w-1" />
            <Icons names="bulb" />
            <div className="w-1" />
            <Icons names="play pause stepBack stepFwd rewind forward first last" />
            <input
              type="range"
              aria-label="speed"
              defaultValue={74}
              className="mr-2 ml-5 h-4 w-[60px] appearance-none bg-transparent [&::-webkit-slider-runnable-track]:h-[3px] [&::-webkit-slider-runnable-track]:border [&::-webkit-slider-runnable-track]:border-[#d0d0d0] [&::-webkit-slider-runnable-track]:bg-[#e8e8e8] [&::-webkit-slider-thumb]:-mt-2 [&::-webkit-slider-thumb]:h-[17px] [&::-webkit-slider-thumb]:w-[9px] [&::-webkit-slider-thumb]:appearance-none [&::-webkit-slider-thumb]:bg-[#0078d7]"
            />
            <IconButton name="clock" corner />
            <div className="w-3.5" />
            <CloseBox />
            <Sep />
            <Icons names="ball" />
            <Sep light />
            <Icons dim names="stackStep" />
            <IconButton name="step" dim active />
            <Icons dim names="step step step stackStep turnArrows" />
            <Sep />
            <IconButton name="stripes" dim corner />
            <Sep />
            <Icons dim names="stepOut stepOut disk" />
            <Sep />
            <Icons dim names="power" />
            <div className="w-1.5" />
            <CloseBox />
            <div className="w-1" />
          </Toolbar>
        </div>

        <div className="flex flex-1">
          <Explorer />
          <MacroStrip />
          <main className="relative min-w-0 flex-1 border-t border-[#555] bg-linear-to-b from-[#2f475a] via-[#10181f] via-60% to-black to-90%">
            <svg viewBox="0 0 40 4" className="absolute bottom-0 left-[204px] h-1 w-10" aria-hidden="true">
              <path d="M0 0l2 4M4 0v4M8 1v3M10 0h1M31 0v4l4-1z" fill="none" stroke="#fff" />
            </svg>
          </main>
          <ViewBar />
        </div>

        <div className="flex h-[26px] border-t border-[#a0a0a0]">
          <div className="flex items-center border-r border-b border-[#a0a0a0] pr-1 pl-0.5">
            <div className="relative mr-1 flex w-[38px] bg-white">
              <Icons names="stock" />
              <Chevron />
            </div>
            <Icons names="pen penRed" />
            <div className="w-[163px]" />
            <Icons dim names="toolTurn" />
            <div className="w-[43px]" />
            <Sep />
            <Icons dim names="axes plug plugHalf" />
            <Sep />
            <Icons dim names="pencil ribbonX" />
            <div className="w-1.5" />
            <CloseBox />
          </div>
        </div>

        <footer className="flex h-[26px] items-center pl-0.5">
          <IconButton name="axes" corner />
          <Combo label="workplane" className="mr-[3px] ml-0.5 w-[228px] bg-[#e1e1e1]" />
          <div className="flex gap-[3px]">
            <StatusField label="x" value="-14.653" />
            <StatusField label="y" value="14.9069" />
            <StatusField label="z" value="0" />
          </div>
          <div className="mr-1 ml-0.5 flex">
            <Icons dim names="xyz" />
            <Icons names="snap" />
          </div>
          <StatusField label="tool" className="w-[75px] border-[#d0d0d0]" />
          <div className="mr-1 ml-2.5">
            <IconButton name="battery" />
          </div>
          <svg viewBox="0 0 18 16" className="mr-1 ml-1.5 h-4 w-[18px] shrink-0" aria-hidden="true">
            <path d="M1 0v7M4 2v4M6 2v4M9 0v7M12 2v4M14 2v4M17 0v7M1 10h2v5H1zM9 10v5M14 10h3v2l-3 3h3" fill="none" stroke="#2d93a6" />
          </svg>
          <StatusField label="units" value="毫米" />
          {["target", "corner", "diameter", "radius"].map((name) => (
            <div key={name} className="ml-[3px] flex items-center">
              <IconButton name={name} />
              <StatusField label={name} />
            </div>
          ))}
          <span className="flex-1" />
          <div className="mr-4 flex h-[17px] w-[76px] shrink-0 items-center justify-between rounded-r-full bg-linear-to-r from-[#0f5e9b] to-[#4bb3e6] pl-0.5 text-[13px] leading-4 text-white">
            Delcam
            <svg viewBox="0 0 18 18" className="h-[17px] w-[17px]" aria-hidden="true">
              <circle cx="9" cy="9" r="8" fill="#3c9ccc" stroke="#d5eefa" />
              <path d="M2 9c3-4 5-3 7-2 3-2 5 0 7 3M4 12l5-5M9 7l3 7M7 7l-1 4" fill="none" stroke="#0b2a3c" strokeWidth="1.5" />
            </svg>
          </div>
        </footer>
      </div>

      <Keyboard />
      <Menu groups={contextMenu} className="top-[276px] left-[90px] w-[165px] border-[#ccc]" />
      <Menu groups={insertMenu} className="top-[502px] left-[251px] w-[134px] border-[#ccc] border-x-[#f1f1f1]" />
      <svg viewBox="0 0 10 17" className="absolute top-[587px] left-[340px] h-[17px] w-2.5" aria-hidden="true">
        <path d="M1 1v13l3-3 2 5 2-1-2-5h4z" fill="#fff" stroke="#222" />
      </svg>
      <Watermark />
      <InputBar />
    </div>
  );
}
